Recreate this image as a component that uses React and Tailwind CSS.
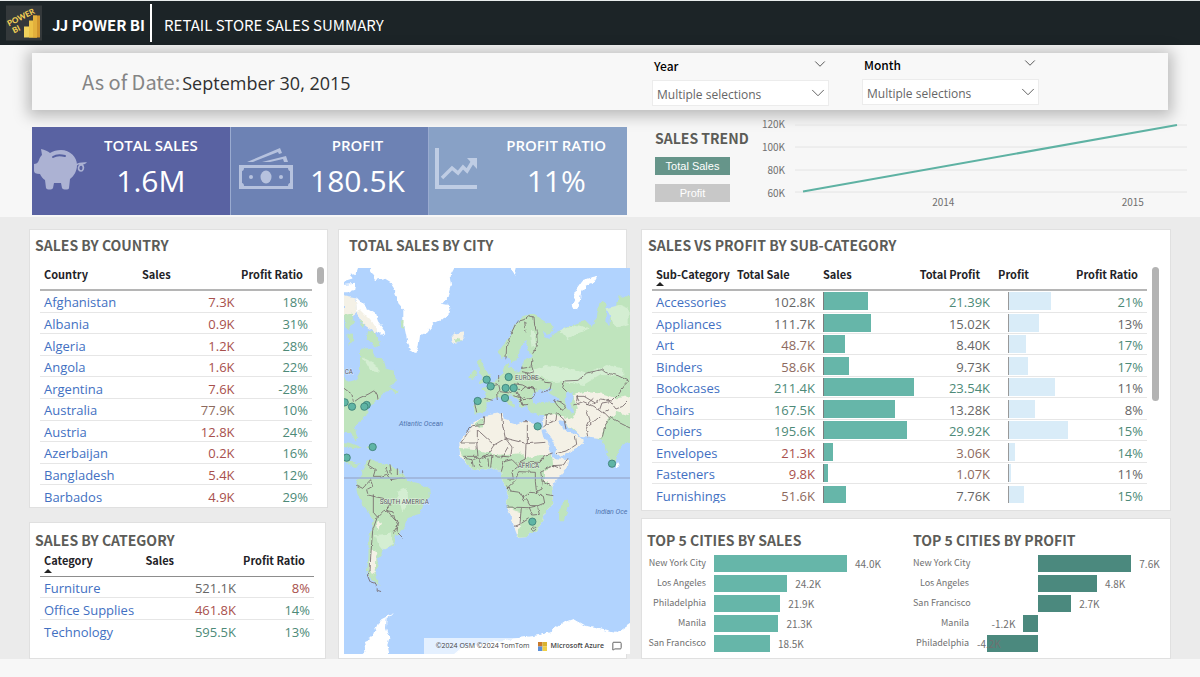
import React, { useState } from 'react';
import { ChevronDown, MessageSquare } from 'lucide-react';

const RED = 'text-[#a8504c]';
const BROWN = 'text-[#8d6a5e]';
const GRAY = 'text-[#666666]';
const GREEN = 'text-[#4d8a78]';

const countries = [
  { name: 'Afghanistan', sales: '7.3K', salesColor: RED, ratio: '18%' },
  { name: 'Albania', sales: '0.9K', salesColor: RED, ratio: '31%' },
  { name: 'Algeria', sales: '1.2K', salesColor: RED, ratio: '28%' },
  { name: 'Angola', sales: '1.6K', salesColor: RED, ratio: '22%' },
  { name: 'Argentina', sales: '7.6K', salesColor: RED, ratio: '-28%' },
  { name: 'Australia', sales: '77.9K', salesColor: BROWN, ratio: '10%' },
  { name: 'Austria', sales: '12.8K', salesColor: RED, ratio: '24%' },
  { name: 'Azerbaijan', sales: '0.2K', salesColor: RED, ratio: '16%' },
  { name: 'Bangladesh', sales: '5.4K', salesColor: RED, ratio: '12%' },
  { name: 'Barbados', sales: '4.9K', salesColor: RED, ratio: '29%' },
];

const categories = [
  { name: 'Furniture', sales: '521.1K', salesColor: GRAY, ratio: '8%', ratioColor: RED },
  { name: 'Office Supplies', sales: '461.8K', salesColor: RED, ratio: '14%', ratioColor: GREEN },
  { name: 'Technology', sales: '595.5K', salesColor: GREEN, ratio: '13%', ratioColor: GREEN },
];

const subCategories = [
  { name: 'Accessories', sales: 102.8, sc: GRAY, profit: 21.39, pc: GREEN, ratio: '21%', rc: GREEN },
  { name: 'Appliances', sales: 111.7, sc: GRAY, profit: 15.02, pc: GRAY, ratio: '13%', rc: GRAY },
  { name: 'Art', sales: 48.7, sc: BROWN, profit: 8.4, pc: GRAY, ratio: '17%', rc: GREEN },
  { name: 'Binders', sales: 58.6, sc: BROWN, profit: 9.73, pc: GRAY, ratio: '17%', rc: GREEN },
  { name: 'Bookcases', sales: 211.4, sc: GREEN, profit: 23.54, pc: GREEN, ratio: '11%', rc: GRAY },
  { name: 'Chairs', sales: 167.5, sc: GREEN, profit: 13.28, pc: GRAY, ratio: '8%', rc: GRAY },
  { name: 'Copiers', sales: 195.6, sc: GREEN, profit: 29.92, pc: GREEN, ratio: '15%', rc: GREEN },
  { name: 'Envelopes', sales: 21.3, sc: RED, profit: 3.06, pc: BROWN, ratio: '14%', rc: GREEN },
  { name: 'Fasteners', sales: 9.8, sc: RED, profit: 1.07, pc: BROWN, ratio: '11%', rc: GRAY },
  { name: 'Furnishings', sales: 51.6, sc: BROWN, profit: 7.76, pc: GRAY, ratio: '15%', rc: GREEN },
];

const topSales = [
  { city: 'New York City', value: 44.0 },
  { city: 'Los Angeles', value: 24.2 },
  { city: 'Philadelphia', value: 21.9 },
  { city: 'Manila', value: 21.3 },
  { city: 'San Francisco', value: 18.5 },
];

const topProfit = [
  { city: 'New York City', value: 7.6 },
  { city: 'Los Angeles', value: 4.8 },
  { city: 'San Francisco', value: 2.7 },
  { city: 'Manila', value: -1.2 },
  { city: 'Philadelphia', value: -4.2 },
];

const pins = [
  [440, 464], [452, 484], [506, 456], [497, 489], [521, 489], [495, 519], [413, 528], [593, 604],
  [14, 532], [36, 545], [80, 540], [73, 545], [98, 666], [20, 698], [816, 716], [577, 890],
];

const TITLE = "font-['Noto_Sans_CJK_SC',sans-serif] text-sm leading-5 font-bold text-[#5c5c58]";
const TH = "font-['Noto_Sans_CJK_SC',sans-serif] text-[11px] leading-5 font-bold text-[#1f2328] whitespace-nowrap";
const LABEL = "font-['Noto_Sans_CJK_SC',sans-serif] text-[#707070]";
const TABLE = "table-fixed border-collapse font-['Open_Sans',sans-serif] text-[13px] leading-[18px]";

function Panel({ className = '', children }) {
  return <section className={`border border-[#e0e0e0] bg-white ${className}`}>{children}</section>;
}

function SortMark() {
  return (
    <svg viewBox="0 0 8 4" className="absolute bottom-[3px] left-1 h-1 w-2" aria-hidden="true">
      <path d="M0 4 4 0l4 4z" fill="#222" />
    </svg>
  );
}

function Logo() {
  return (
    <svg viewBox="0 0 36 35" className="h-9 w-9" role="img" aria-label="Power BI">
      <rect width="36" height="35" fill="#34393b" />
      <rect x="18" y="21" width="9" height="11" fill="#f0d25c" />
      <rect x="23" y="15" width="8" height="17" fill="#ecc246" />
      <rect x="27" y="10" width="7" height="22" fill="#cf932c" />
      <rect x="27" y="10" width="4" height="22" fill="#e2b03c" />
      <g fill="#f2cf55" fontFamily="Lato, sans-serif" fontWeight="900" fontSize="8">
        <text transform="translate(3 21) rotate(-27)">POWER</text>
        <text transform="translate(8 28) rotate(-27)">BI</text>
      </g>
    </svg>
  );
}

function Slicer({ id, label, className = '' }) {
  return (
    <div className={`w-[177px] ${className}`}>
      <div className="flex items-center justify-between px-[2px]">
        <label htmlFor={id} className="font-['Noto_Sans_CJK_SC',sans-serif] text-xs leading-4 font-medium text-black">{label}</label>
        <button type="button" aria-label={`Clear ${label}`} className="-mt-1 -mr-[2px] text-[#555]">
          <ChevronDown size={18} strokeWidth={1.3} />
        </button>
      </div>
      <div className="relative mt-[6px]">
        <select id={id} className="h-[26px] w-full appearance-none border border-[#ececec] bg-white pt-[3px] pl-1 font-['Open_Sans',sans-serif] text-xs text-[#666]">
          <option>Multiple selections</option>
        </select>
        <ChevronDown size={22} strokeWidth={1} className="pointer-events-none absolute top-[2px] right-0 text-[#555]" />
      </div>
    </div>
  );
}

function Kpi({ label, value, color, iconBox, icon }) {
  return (
    <div className={`flex h-[88px] flex-1 items-center ${color}`}>
      <div className={`shrink-0 ${iconBox}`}>{icon}</div>
      <div className="flex-1 text-center font-['Open_Sans',sans-serif] text-white">
        <p className="text-[15px] leading-5 font-semibold">{label}</p>
        <p className="mt-2 mb-2 text-[30px] leading-9">{value}</p>
      </div>
    </div>
  );
}

function PiggyIcon() {
  return (
    <svg viewBox="0 0 56 44" className="mb-1 h-11 w-14" aria-hidden="true">
      <path
        d="M9 2c4 1 7 2 9 4 3-2 7-3 11-3 9 0 16 7 16 15 0 6-3 11-7 14l-1 9c0 2-6 2-7 0l-1-5h-7l-1 5c-1 2-6 2-7 0l-1-8c-2-1-4-4-5-6-4 0-6-1-6-3v-7c2 0 4-1 5-4 1-3 2-4 3-5z"
        fill="#acb2d3"
      />
      <path d="M21 10c3-2 8-2 12-1" stroke="#5661a1" strokeWidth="2" fill="none" strokeLinecap="round" />
      <path d="M44 18c3-2 6-2 9-2-1 1-3 0-5 2-3 3-1 6 1 6s3-3 2-5-3-1-4 0" stroke="#acb2d3" strokeWidth="1.7" fill="none" />
    </svg>
  );
}

function CashIcon() {
  return (
    <svg viewBox="0 0 56 42" className="mb-1 ml-[7px] h-[42px] w-14" aria-hidden="true">
      <path d="M9 14 42 0l2 5-3 1-1-2-25 10zM24 14l24-6 2 6h-4l-1-3-13 3z" fill="#b6c2de" />
      <path d="M1 17h54v24H1zM6 20c0 2-1 3-2 3v12c1 0 2 1 2 3h44c0-2 1-3 2-3V23c-1 0-2-1-2-3z" fill="#b6c2de" fillRule="evenodd" />
      <ellipse cx="28" cy="29" rx="5.500" ry="6.500" fill="#b6c2de" />
      <circle cx="13" cy="29" r="2" fill="#b6c2de" />
      <circle cx="43" cy="29" r="2" fill="#b6c2de" />
    </svg>
  );
}

function TrendIcon() {
  return (
    <svg viewBox="0 0 44 44" className="mb-1 ml-[5px] h-11 w-11" aria-hidden="true">
      <path d="M3 1v39h40" stroke="#bfcde4" strokeWidth="4" fill="none" />
      <path d="m8 31 10-10 6 5 5-6 4 4 6-10" stroke="#bfcde4" strokeWidth="3.500" fill="none" />
      <path d="M33 11h10v11z" fill="#bfcde4" />
    </svg>
  );
}

function SalesTrend() {
  const [measure, setMeasure] = useState('Total Sales');
  return (
    <div className="flex pl-[14px]">
      <div className="w-[100px] shrink-0 pt-px">
        <h2 className={`${TITLE} whitespace-nowrap`}>SALES TREND</h2>
        {['Total Sales', 'Profit'].map((m) => (
          <button
            key={m}
            type="button"
            onClick={() => setMeasure(m)}
            className={`mt-[9px] block h-[18px] w-[75px] font-['Liberation_Sans',sans-serif] text-[11px] leading-4 text-white ${m === measure ? 'bg-[#66958a]' : 'bg-[#c8c8c8]'}`}
          >
            {m}
          </button>
        ))}
      </div>
      <div className={`-mt-[11px] flex w-10 shrink-0 flex-col gap-[7px] pr-[10px] text-right text-[10px] leading-4 ${LABEL}`}>
        <span>120K</span>
        <span>100K</span>
        <span>80K</span>
        <span>60K</span>
      </div>
      <div className="-mr-4 -mt-[3px] flex-1">
        <svg viewBox="0 0 392 70" preserveAspectRatio="none" className="block h-[70px] w-full" role="img" aria-label="Sales trend 2014 to 2015">
          <path d="M0 1h392M0 23h392M0 46h392M0 68h392" stroke="#e4e4e4" strokeWidth="1" vectorEffect="non-scaling-stroke" />
          <path d="M8 67.500 382 1" stroke="#5eb2a3" strokeWidth="2" vectorEffect="non-scaling-stroke" fill="none" />
        </svg>
        <div className={`flex justify-between pl-[35%] pr-[11%] text-[10px] leading-4 ${LABEL}`}>
          <span>2014</span>
          <span>2015</span>
        </div>
      </div>
    </div>
  );
}

function CountryTable() {
  return (
    <div className="mt-[9px] flex pl-[10px]">
      <table className={`h-[242px] flex-1 ${TABLE}`}>
        <colgroup>
          <col className="w-[36%]" />
          <col className="w-[37%]" />
          <col className="w-[27%]" />
        </colgroup>
        <thead>
          <tr className="h-[26px] border-b-2 border-[#b5b5b5] align-top">
            <th className={`${TH} pl-1 text-left`}>Country</th>
            <th className={`${TH} pl-1 text-left`}>Sales</th>
            <th className={`${TH} pr-[9px] text-right`}>Profit Ratio</th>
          </tr>
        </thead>
        <tbody>
          {countries.map((c) => (
            <tr key={c.name} className="border-b border-[#e6e6e6] last:border-0">
              <td className="pt-[2px] pl-1 text-[#4270c2]">{c.name}</td>
              <td className={`pt-[2px] pr-1 text-right ${c.salesColor}`}>{c.sales}</td>
              <td className={`pt-[2px] pr-1 text-right ${GREEN}`}>{c.ratio}</td>
            </tr>
          ))}
        </tbody>
      </table>
      <div className="mr-[3px] ml-[5px] mt-[3px] h-[17px] w-[7px] rounded-full bg-[#b3b3b3]" />
    </div>
  );
}

function CategoryTable() {
  return (
    <div className="pr-[11px] pl-[10px]">
      <table className={`h-[91px] w-full ${TABLE}`}>
        <colgroup>
          <col className="w-[37%]" />
          <col className="w-[36%]" />
          <col className="w-[27%]" />
        </colgroup>
        <thead>
          <tr className="h-[26px] border-b border-[#8d8d8d] align-top">
            <th className={`${TH} relative pl-1 text-left`}>
              Category
              <SortMark />
            </th>
            <th className={`${TH} pl-1 text-left`}>Sales</th>
            <th className={`${TH} pr-[9px] text-right`}>Profit Ratio</th>
          </tr>
        </thead>
        <tbody>
          {categories.map((c) => (
            <tr key={c.name} className="border-b border-[#e6e6e6] last:border-0">
              <td className="pt-[2px] pl-1 whitespace-nowrap text-[#4270c2]">{c.name}</td>
              <td className={`pt-[2px] pr-1 text-right ${c.salesColor}`}>{c.sales}</td>
              <td className={`pt-[2px] pr-1 text-right ${c.ratioColor}`}>{c.ratio}</td>
            </tr>
          ))}
        </tbody>
      </table>
    </div>
  );
}

function SubCategoryTable() {
  return (
    <div className="mt-[9px] flex h-[239px] overflow-hidden pl-[10px]">
      <table className={`h-[242px] flex-1 ${TABLE}`}>
        <colgroup>
          <col className="w-[81px]" />
          <col className="w-[86px]" />
          <col />
          <col className="w-[70px]" />
          <col className="w-[82px]" />
          <col className="w-[70px]" />
        </colgroup>
        <thead>
          <tr className="h-[26px] border-b-2 border-[#b5b5b5] align-top">
            <th className={`${TH} relative pl-1 text-left`}>
              Sub-Category
              <SortMark />
            </th>
            <th className={`${TH} pl-1 text-left`}>Total Sale</th>
            <th className={`${TH} pl-1 text-left`}>Sales</th>
            <th className={`${TH} pr-[14px] text-right`}>Total Profit</th>
            <th className={`${TH} pl-1 text-left`}>Profit</th>
            <th className={`${TH} pr-[9px] text-right`}>Profit Ratio</th>
          </tr>
        </thead>
        <tbody>
          {subCategories.map((s) => (
            <tr key={s.name} className="border-b border-[#e6e6e6]">
              <td className="pt-[2px] pl-1 whitespace-nowrap text-[#4270c2]">{s.name}</td>
              <td className={`pt-[2px] pr-1 text-right ${s.sc}`}>{s.sales.toFixed(1)}K</td>
              <td className="pr-[6px] pl-1">
                <div className="border-l border-[#7d7d7d]">
                  <div className="h-[18px] bg-[#66b6a9]" style={{ width: `${(s.sales / 211.4) * 100}%` }} />
                </div>
              </td>
              <td className={`pt-[2px] pr-1 text-right ${s.pc}`}>{s.profit.toFixed(2)}K</td>
              <td className="pr-2 pl-[14px]">
                <div className="border-l border-[#999]">
                  <div className="h-[18px] bg-[#d9ecf8]" style={{ width: `${(s.profit / 29.92) * 100}%` }} />
                </div>
              </td>
              <td className={`pt-[2px] pr-1 text-right ${s.rc}`}>{s.ratio}</td>
            </tr>
          ))}
        </tbody>
      </table>
      <div className="mr-[11px] ml-[5px] mt-[3px] h-[134px] w-[7px] rounded-full bg-[#b3b3b3]" />
    </div>
  );
}

function TopSales() {
  return (
    <div>
      <h2 className={TITLE}>TOP 5 CITIES BY SALES</h2>
      <ul className={`mt-[3px] text-[10px] ${LABEL}`}>
        {topSales.map((t) => (
          <li key={t.city} className="flex h-5 items-center">
            <span className="w-[59px] shrink-0 text-right text-[9px] whitespace-nowrap">{t.city}</span>
            <span className="ml-2 flex flex-1 items-center pr-[66px]">
              <span className="h-[17px] shrink-0 bg-[#66b6a9]" style={{ width: `${(t.value / 44) * 100}%` }} />
              <span className="ml-2">{t.value.toFixed(1)}K</span>
            </span>
          </li>
        ))}
      </ul>
    </div>
  );
}

function TopProfit() {
  return (
    <div>
      <h2 className={TITLE}>TOP 5 CITIES BY PROFIT</h2>
      <ul className={`mt-[3px] text-[10px] ${LABEL}`}>
        {topProfit.map((t) => (
          <li key={t.city} className="flex h-5 items-center">
            <span className="w-14 shrink-0 text-right text-[9px] whitespace-nowrap">{t.city}</span>
            <span className="relative ml-2 flex h-5 w-[61px] shrink-0 items-center justify-end">
              {t.value < 0 && (
                <>
                  <span className={t.value < -2 ? 'absolute left-0' : 'mr-2'}>{t.value.toFixed(1)}K</span>
                  <span className="h-[17px] bg-[#4b897e]" style={{ width: `${(-t.value / 5) * 100}%` }} />
                </>
              )}
            </span>
            <span className="flex flex-1 items-center">
              {t.value > 0 && (
                <>
                  <span className="h-[17px] shrink-0 bg-[#4b897e]" style={{ width: `${t.value * 9.3}%` }} />
                  <span className="ml-2">{t.value.toFixed(1)}K</span>
                </>
              )}
            </span>
          </li>
        ))}
      </ul>
    </div>
  );
}

function WorldMap() {
  return (
    <svg viewBox="12 129 858 1158" preserveAspectRatio="xMidYMid slice" className="absolute inset-0 h-full w-full bg-[#b1d3fe]" role="img" aria-label="Total sales by city">
      <defs>
        <filter id="coast" x="0" y="0" width="100%" height="100%">
          <feTurbulence type="fractalNoise" baseFrequency="0.05" numOctaves="3" seed="4" />
          <feDisplacementMap in="SourceGraphic" scale="16" xChannelSelector="R" yChannelSelector="G" />
        </filter>
        <filter id="rough" x="0" y="0" width="100%" height="100%">
          <feTurbulence type="fractalNoise" baseFrequency="0.06" numOctaves="2" seed="9" />
          <feDisplacementMap in="SourceGraphic" scale="9" xChannelSelector="R" yChannelSelector="G" />
        </filter>
      </defs>
      <g filter="url(#coast)">
        <rect x="0" y="110" width="890" height="1190" fill="#b1d3fe" />
        {/* arctic islands, greenland, iceland */}
        <g fill="#fff">
          <path d="M100 120 92 140 108 165 130 160 150 172 165 195 175 235 190 252 190 290 197 325 203 355 216 382 226 384 236 362 240 332 262 320 282 295 310 282 330 265 326 240 306 236 326 215 336 180 332 150 348 120z" />
          <path d="M0 120h58l-8 24-22 4 12 14-28 8H0zM0 180l48-4-2 18-22 8H0zM46 214l20 20 14 14 24 14 10 30 22 30-10 8-24-24-18-6-16-24-18-18zM512 120h20l-8 36zM775 152l-10 18-28 12-14 26-8 40-14 6-6-12 10-22 2-26 20-28 22-8z" />
        </g>
        <g fill="#f4f1e6">
          <path d="M12 214l34 6 6 40-16 12-24-2zM60 252l30 30 24 34-10 6-34-24-20-30zM332 338l10-12 30-4-2 16-14 14-18 2z" />
        </g>
        <g fill="#bfe4bd">
          <path d="M12 270l24-4 6 24-14 24-12-10zM22 328l16-6 2 24-14 18zM60 296l14 4-6 12zM84 318l26 6 10 42-18-4-22-18zM58 290l10-2 2 12zM182 285l12 4-2 26-8-6zM344 342l14-4 4 10-10 4z" />
          <path d="M60 372l34-4 14 30 22 2 8 30 26 8 4 30-18 22 26 6-6 12-14-12-20 4-16 20-18 16-14 8-4 24-34 26-6 12 8 30-4 14-14-24-40-6V440l30 32 22-6 14-26z" />
          <path d="M0 650l30 4 36 14-26 4-40-10zM82 664l28 4-6 8-20-2zM0 684l26 22 26 10 12-2-20 12-44-20z" />
          <path d="M92 702 106 712 150 718 166 732 190 746 204 768 240 776 268 795 270 815 248 838 240 866 206 876 196 904 166 940 162 962 132 968 126 988 108 1006 116 1022 104 1040 108 1060 120 1082 94 1066 80 1046 85 1000 86 950 98 884 70 842 52 806 46 778 64 748 72 722z" />
          {/* british isles */}
          <path d="M414 408l14-4-2 16 14 18 10 18-2 16-30 4 10-18-10-12zM394 440l14-8 4 16-14 14-10-4z" />
          {/* eurasia */}
          <path d="M472 385 488 362 505 345 512 318 524 298 545 280 575 266 595 276 636 300 640 318 622 326 606 320 612 336 626 342 640 326 656 318 680 308 720 292 738 288 752 302 764 296 772 270 778 235 790 226 800 240 796 290 808 300 812 262 830 250 836 215 890 212V640L862 652 845 662 832 684 826 712 816 728 806 700 798 668 788 650 774 640 754 630 720 628 700 615 672 592 652 574 622 570 590 570 572 560 560 540 540 548 532 526 514 508 500 512 524 536 520 552 500 530 480 518 452 524 440 538 432 560 404 566 400 524 436 520 440 504 424 490 446 484 470 460 488 450 496 420 506 412 504 430 540 440 552 428 550 410 560 400 578 392 566 380 560 362 564 346 550 352 540 362 538 384 528 406 514 412 506 394 486 398z" />
        </g>
        {/* central asia, iran, arabia */}
        <path fill="#f4f1e6" d="M700 512 730 500 790 506 830 520 890 510V560L860 570 830 560 800 588 786 640 720 632 700 612 672 592 700 580 712 556zM610 572 650 566 690 584 664 592 682 622 710 628 732 648 712 672 660 696 646 684 626 650 608 618z" />
        <path fill="#bfe4bd" d="M810 574 850 596 890 612V640L862 652 845 662 832 684 826 712 816 728 806 700 798 668 782 648z" />
        <g fill="#d4eed2">
          <path d="M560 440 620 420 690 430 740 446 800 420 850 430 850 452 780 450 730 480 690 470 640 474 600 450zM800 250l40-10 26 10v50l-30 10-20-20zM660 316l50-16 40 10-70 30zM104 930l44-4 14 30-30 16-14-8zM70 400l40 20 10 20-30-6z" />
          <path d="M170 800l30-10 6 40-20 30zM572 318l10 0 6 40-10 10z" />
        </g>
        {/* inland seas */}
        <g fill="#b1d3fe">
          <path d="M574 520 580 504 598 494 620 500 640 512 660 528 640 534 604 530 582 536zM682 500 700 502 700 520 690 530 702 560 694 566 678 540 674 520zM606 500l20-14 12 8-14 10z" />
          <path d="M652 588 664 590 678 606 696 612 690 620 670 612zM606 616l10-4 34 60-6 14-14-18z" />
        </g>
        {/* africa */}
        <path fill="#f4f1e6" d="M434 572 488 564 492 584 530 596 548 588 604 602 612 630 632 680 642 700 688 702 684 726 650 764 634 786 640 836 614 862 610 888 590 914 562 936 536 938 524 908 512 876 498 848 506 814 488 768 484 740 440 730 402 736 380 718 360 692 358 652 376 628 398 596z" />
        <path fill="#bfe4bd" d="M434 572 424 604 398 606zM358 672 420 676 470 690 540 682 560 700 600 690 636 690 640 724 612 740 612 764 634 786 640 836 614 862 610 888 590 914 562 936 536 938 534 912 544 892 540 862 498 848 506 814 488 768 484 740 440 730 402 736 380 718zM684 820l4 18-16 48-16 0-2-22 14-26z" />
        <path fill="#fff" d="M834 710l6 12-4 10-6-10z" />
        <g fill="#fff">
          <path d="M160 1162 140 1178 138 1210 148 1240 142 1260 150 1300H52l24-20-4-32 18-8 20-30 14-30zM330 1300l40-34 100-18 130-18 40-14 34-24 28-10 36 20 90 22 50-34h20v140z" />
        </g>
        <path fill="#f4f1e6" d="M94 970l18 14-6 20-2 36-12 8-2-30zM108 884l18 10-10 24z" />
      </g>
      <g fill="none" stroke="#75686a" strokeWidth="2.500" strokeLinejoin="round" filter="url(#rough)">
        {/* americas */}
        <path d="M12 490l24 18 4 24 20-14 24-10 20-12 8 14 2 14M48 780l20 10 24-26 6 20-18 10 4 16 26 6 20 4 20 20-10 14 22 28 14 10-6 28 20 20M90 704l-6 16 22 14-6 20 24 0 16-6 12 16 24-4 22-2M150 718l4 30M172 730v20M188 736v16M100 808l0 54 12 14-14 40-6 80-2 44-8 10 8 20 18 6 4 20 12 4M112 876l20-20 26 4 6 20 10 20-16 26M136 726l10 24" />
        {/* europe */}
        <path d="M498 400l2-40 16-40 14-30 22-6 14-12 16 4 2 26 6 20 2 40-14 24M554 290l4 32M576 400l-2 20 6 20-20 6 16 16 28-4 10 14 20 2-4 20-26 8M446 476l14 6 16-4 4 18-10 10 2 16M476 470l0-20M480 500l30 4 16-12 20 2 12-10M522 476l26 4 14 8 18-2 6 20-10 14-26 4-20-20-10-12M532 500l14 40 20-2M520 512l20 6 10 24M546 440l18 4M404 532l6 30M436 520l22 6M546 430l26-4M586 492l-20-6M540 530l14-14" />
        {/* asia */}
        <path d="M680 500l-12-12 6-20 40-2 26-22 46-10 10 8 38 10 32 16-10 10-20 30-20 20-34-6-16 12-34-20-22 0 8 16M640 524l20 6 16 12-8 14-14-12zM614 570l36-6 22 20 6 28M620 570l-2 30-8 6M650 568l-2 18-30 12M700 540l30-10 32 14 26 20 16-10M740 556l10 30-10 20 6 28M778 556l8-22 24-4 18 22 20-8 22-22M790 560l20 20-14 20-10 40M810 574l30 20 32 16M782 572l-34 30M648 686l30-8 20-12 12-8-4-26M712 510l-2 22M760 520l-22 20" />
        {/* africa */}
        <path d="M434 574l-2 24-34 4-20 18M386 620l-24 34 50 0 0-40 50 46 34-20-8-40-4-36M462 660l-20 30-28 14M550 590l12 0v66l-66-16 20 26-4 30-50-4M562 656l54-4M558 656l-2 46-20 10M410 654l4 40-44 0M372 700l24 4 4 22M400 704l14-6 12 28M426 700l30-10-4 38M444 700l2 28M484 740l8-30 24-6 20 20-20 14 4 24-18 0M540 712l60 0 14-22M602 738l38-16 20 8M602 738l4 30 26 14M500 790l26-24 10-26 50 2 0 28 4 34-20-2-20 16-10-16-30-4-10-16M590 800l16-8 4-22M590 804l20 10 4 20-20 8-24 0-10-18-10 4 0-18M500 846l66 2 20-4M544 848l-4 50-16 6M568 848l10 22 20-2-6-24M566 878l-22 14M580 906a6 6 0 1 0 1 0M640 812l-24-4M616 690l22-6M638 722l32-2 14-20M484 700l20-34" />
      </g>
      <path d="M12 759h858" stroke="#9db0d6" strokeWidth="4" />
      <g fill="#59595e" fontFamily="Roboto, sans-serif" fontSize="19" stroke="#fff" strokeOpacity=".5" strokeWidth="3" paintOrder="stroke">
        <text x="525" y="466">EUROPE</text>
        <text x="533" y="729">AFRICA</text>
        <text x="119" y="837">SOUTH AMERICA</text>
        <text x="14" y="446">CA</text>
      </g>
      <g fill="#4f74ae" fontFamily="Roboto, sans-serif" fontStyle="italic" fontSize="21">
        <text x="177" y="604">Atlantic Ocean</text>
        <text x="766" y="868">Indian Oce</text>
      </g>
      {pins.map(([x, y]) => (
        <circle key={`${x}-${y}`} cx={x} cy={y} r="11" fill="#5fb5a5" stroke="#3c7d76" strokeWidth="2.500" />
      ))}
    </svg>
  );
}

export default function App() {
  return (
    <div className="flex min-h-screen flex-col bg-[#f7f7f7]">
      <header className="flex h-[45px] items-center border-t border-[#e8ecec] bg-[#1c2427] pl-[6px] font-['Noto_Sans_CJK_SC',sans-serif] text-[15px] leading-5 text-white">
        <Logo />
        <p className="mt-1 ml-[10px] font-bold">JJ POWER BI</p>
        <span className="ml-[5px] h-[38px] w-[2px] bg-white" />
        <h1 className="mt-1 ml-3">RETAIL STORE SALES SUMMARY</h1>
      </header>

      <div className="px-8 pt-2">
        <div className="flex h-[57px] items-start bg-[#f8f8f8] shadow-[0_2px_14px_4px_rgba(0,0,0,0.25)]">
          <p className="flex flex-1 items-baseline self-center pt-[2px] pl-[50px] font-['Open_Sans',sans-serif] text-[#303030]">
            <span className="font-['Noto_Sans_CJK_SC',sans-serif] text-xl leading-7 text-[#858585]">As of Date:</span>
            <span className="ml-[2px] text-lg leading-7">September 30, 2015</span>
          </p>
          <div className="flex pr-[129px]">
            <Slicer id="year" label="Year" className="mt-[5px]" />
            <Slicer id="month" label="Month" className="mt-1 ml-[33px]" />
          </div>
        </div>
      </div>

      <div className="grid grid-cols-[598fr_530fr] gap-[14px] px-[29px] pt-[17px] pb-[2px]">
        <div className="ml-[3px] flex gap-px bg-[#9aabd0]">
          <Kpi label="TOTAL SALES" value="1.6M" color="bg-[#5962a2]" iconBox="w-10" icon={<PiggyIcon />} />
          <Kpi label="PROFIT" value="180.5K" color="bg-[#6d82b4]" iconBox="w-14" icon={<CashIcon />} />
          <Kpi label="PROFIT RATIO" value="11%" color="bg-[#88a1c6]" iconBox="w-14" icon={<TrendIcon />} />
        </div>
        <SalesTrend />
      </div>

      <main className="grid grid-cols-[598fr_530fr] gap-[14px] bg-[#ebebeb] px-[29px] pt-3">
        <div className="grid grid-cols-[299fr_289fr] gap-[10px]">
          <div className="flex flex-col gap-[14px]">
            <Panel className="pt-[5px] pb-px">
              <h2 className={`${TITLE} pl-[5px]`}>SALES BY COUNTRY</h2>
              <CountryTable />
            </Panel>
            <Panel className="mr-[2px] flex-1 pt-[7px]">
              <h2 className={`${TITLE} pl-[5px]`}>SALES BY CATEGORY</h2>
              <CategoryTable />
            </Panel>
          </div>
          <Panel className="flex flex-col pt-[5px] pb-1 pl-[5px]">
            <h2 className={`${TITLE} pl-[5px]`}>TOTAL SALES BY CITY</h2>
            <div className="relative -mr-1 mt-[13px] flex flex-1 items-end justify-end overflow-hidden">
              <WorldMap />
              <div className="relative flex h-4 items-center gap-1 bg-white/65 pr-2 pl-3 font-['Open_Sans',sans-serif] text-[7px] leading-4 text-[#444]">
                <span className="mr-1">©2024 OSM ©2024 TomTom</span>
                <svg viewBox="0 0 9 9" className="h-[9px] w-[9px]" aria-hidden="true">
                  <path d="M0 0h4.500v4.500H0z" fill="#c8792c" />
                  <path d="M4.500 0H9v4.500H4.500z" fill="#d9b22f" />
                  <path d="M0 4.500h4.500V9H0z" fill="#5b8fd8" />
                  <path d="M4.500 4.500H9V9H4.500z" fill="#f0cf45" />
                </svg>
                <span className="mr-1 font-semibold">Microsoft Azure</span>
                <MessageSquare size={10} strokeWidth={2} />
              </div>
            </div>
          </Panel>
        </div>

        <div className="flex flex-col gap-[7px]">
          <Panel className="pt-[5px] pb-[7px]">
            <h2 className={`${TITLE} pl-[6px]`}>SALES VS PROFIT BY SUB-CATEGORY</h2>
            <SubCategoryTable />
          </Panel>
          <Panel className="grid flex-1 grid-cols-[266fr_257fr] pt-[11px] pb-[5px] pl-[5px]">
            <TopSales />
            <TopProfit />
          </Panel>
        </div>
      </main>
    </div>
  );
}
